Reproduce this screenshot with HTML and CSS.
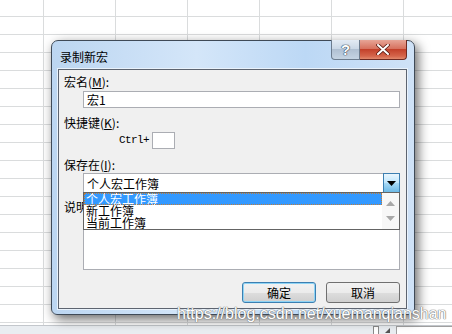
FILE: index.html
```html
<!DOCTYPE html>
<html lang="zh-CN">
<head>
    <meta charset="UTF-8">
    <title>录制新宏</title>
    <link rel="stylesheet" href="styles.css">
</head>
<body>
    <div class="sheet">
        <div class="cells"></div>
        <div class="statusbar">
            <span class="tab-split"></span>
            <span class="tab-arrow"></span>
            <span class="hscroll"></span>
        </div>
    </div>

    <div class="dialog">
        <div class="titlebar">
            <span class="title">录制新宏</span>
            <div class="caption-buttons">
                <span class="btn-help">?</span>
                <span class="btn-close">
                    <svg width="14" height="11" viewBox="0 0 14 11">
                        <path d="M2 1 L12 10 M12 1 L2 10" stroke="#5a1a12" stroke-width="3.6" stroke-linecap="round"/>
                        <path d="M2 1 L12 10 M12 1 L2 10" stroke="#fff" stroke-width="2" stroke-linecap="round"/>
                    </svg>
                </span>
            </div>
        </div>
        <div class="panel">
            <label class="field-label">宏名(<u>M</u>):</label>
            <div class="textbox">宏1</div>

            <label class="field-label">快捷键(<u>K</u>):</label>
            <div class="shortcut">
                <span class="ctrl">Ctrl+</span>
                <span class="keybox"></span>
            </div>

            <label class="field-label">保存在(<u>I</u>):</label>
            <div class="combo">
                <span class="combo-value">个人宏工作簿</span>
                <span class="combo-button">
                    <svg width="9" height="5" viewBox="0 0 9 5"><path d="M0 0 H9 L4.5 5 Z" fill="#000"/></svg>
                </span>
                <div class="droplist">
                    <div class="items">
                        <div class="item selected">个人宏工作簿</div>
                        <div class="item">新工作簿</div>
                        <div class="item">当前工作簿</div>
                    </div>
                    <div class="list-scroll">
                        <svg width="9" height="5" viewBox="0 0 9 5"><path d="M0 5 H9 L4.5 0 Z" fill="#a8a8a8"/></svg>
                        <svg width="9" height="5" viewBox="0 0 9 5"><path d="M0 0 H9 L4.5 5 Z" fill="#a8a8a8"/></svg>
                    </div>
                </div>
            </div>

            <div class="desc-row">
                <label class="field-label">说明(<u>D</u>):</label>
                <div class="textarea"></div>
            </div>

            <div class="actions">
                <button class="default">确定</button>
                <button>取消</button>
            </div>
        </div>
    </div>

    <div class="watermark">https://blog.csdn.net/xuemanqianshan</div>
</body>
</html>
```

FILE: styles.css
```css
body {
    margin: 0;
    width: 452px;
    height: 334px;
    overflow: hidden;
    position: relative;
    font-family: "Noto Sans CJK SC", "Liberation Sans", sans-serif;
    font-size: 12px;
    background: #fff;
}

.sheet {
    display: flex;
    flex-direction: column;
    height: 334px;
}

.cells {
    flex: 1;
    background-color: #fff;
    background-image:
        linear-gradient(to right, #dadcdd 1px, transparent 1px),
        linear-gradient(to bottom, #dadcdd 1px, transparent 1px);
    background-size: 72px 18px;
    background-position: 43px 16px;
}

.statusbar {
    height: 8px;
    border-top: 1px solid #c3c7cc;
    background: #e9edf1;
    display: flex;
    align-items: flex-start;
    padding-left: 373px;
    gap: 6px;
}

.tab-split {
    width: 4px;
    height: 7px;
    border: 1px solid #8a8a8a;
    border-bottom: none;
    background: #fff;
}

.tab-arrow {
    width: 0;
    height: 0;
    margin-top: 2px;
    border-right: 5px solid #555;
    border-top: 5px solid transparent;
}

.hscroll {
    flex: 1;
    height: 8px;
    border-left: 1px solid #a0a0a0;
    border-top: 1px solid #a0a0a0;
    background: #fff;
}

/* dialog window */
.dialog {
    position: absolute;
    left: 51px;
    top: 40px;
    width: 349px;
    height: 268px;
    border: 1px solid #3f4a57;
    border-radius: 7px 7px 6px 6px;
    background: linear-gradient(to right, #bcd6f1, #d4e6f9 40%, #bcd8f5 70%, #cfe2f7);
    box-shadow: 3px 4px 12px rgba(0, 0, 0, 0.6);
    display: flex;
    flex-direction: column;
    padding: 0 7px 5px 6px;
}

.titlebar {
    height: 28px;
    display: flex;
    justify-content: space-between;
    align-items: flex-start;
}

.title {
    margin-top: 9px;
    margin-left: 2px;
    font-size: 12px;
    line-height: 14px;
    color: #000;
}

.caption-buttons {
    display: flex;
    margin-top: -1px;
}

.btn-help, .btn-close {
    height: 19px;
    display: flex;
    justify-content: center;
    align-items: center;
    border: 1px solid #6c7c8e;
    border-top: none;
}

.btn-help {
    width: 27px;
    border-radius: 0 0 0 4px;
    background: linear-gradient(to bottom, #e3ebf4, #cbd8e6 45%, #b0c0d2 50%, #c5d4e3);
    font-family: "Liberation Sans", sans-serif;
    font-weight: bold;
    font-size: 15px;
    line-height: 15px;
    color: #fff;
    text-shadow: 0 0 1px #2d3b4d, 0 0 1px #2d3b4d, 0 0 1px #2d3b4d;
}

.btn-close {
    width: 46px;
    border-left: none;
    border-color: #6e2a22;
    border-radius: 0 0 4px 0;
    background: linear-gradient(to bottom, #e7a597, #d7725f 45%, #c3412b 50%, #d5654b 85%, #e28a6e);
}

.panel {
    flex: 1;
    background: #f0f0f0;
    border: 1px solid #5d6470;
    box-shadow: 0 0 0 1px #e9f2fb;
    padding: 5px 6px 0 5px;
    display: flex;
    flex-direction: column;
    position: relative;
}

.field-label {
    line-height: 14px;
    height: 14px;
    color: #000;
}

.field-label u {
    text-decoration: underline;
    text-underline-offset: 1px;
}

.textbox {
    margin: 2px 0 0 19px;
    height: 15px;
    border: 1px solid #abadb3;
    background: #fff;
    line-height: 15px;
    padding-left: 3px;
}

.panel > .field-label:nth-of-type(2) {
    margin-top: 8px;
}

.shortcut {
    display: flex;
    align-items: center;
    gap: 3px;
    margin: 1px 0 0 55px;
    height: 18px;
}

.ctrl {
    font-family: "Liberation Mono", monospace;
    font-size: 11px;
    letter-spacing: -0.6px;
}

.keybox {
    width: 21px;
    height: 15px;
    border: 1px solid #abadb3;
    background: #fff;
}

.panel > .field-label:nth-of-type(3) {
    margin-top: 9px;
}

.combo {
    margin: 1px 0 0 19px;
    height: 18px;
    border: 1px solid #abadb3;
    background: #fff;
    display: flex;
    align-items: center;
    position: relative;
}

.combo-value {
    flex: 1;
    padding-left: 3px;
}

.combo-button {
    box-sizing: border-box;
    width: 17px;
    height: 20px;
    margin: -1px -1px 0 0;
    align-self: flex-start;
    border: 1px solid #3c7fb1;
    background: linear-gradient(to bottom, #eaf6fd, #bee6fd 50%, #a7d9f5 51%, #6cb9e6);
    display: flex;
    justify-content: center;
    align-items: center;
}

.droplist {
    position: absolute;
    left: -1px;
    right: -1px;
    top: 18px;
    height: 36px;
    border: 1px solid #646464;
    background: #fff;
    display: flex;
    z-index: 2;
}

.items {
    flex: 1;
}

.item {
    height: 12px;
    line-height: 12px;
    padding-left: 2px;
    white-space: nowrap;
}

.item.selected {
    background: #3399ff;
    color: #fff;
    outline: 1px dotted #c07d3a;
    outline-offset: -1px;
}

.list-scroll {
    width: 17px;
    background: #f7f7f7;
    display: flex;
    flex-direction: column;
    justify-content: space-around;
    align-items: center;
    padding: 3px 0;
}

.desc-row {
    display: flex;
    flex-direction: column;
    margin-top: 7px;
}

.textarea {
    margin: 1px 0 0 19px;
    height: 53px;
    border: 1px solid #abadb3;
    background: #fff;
}

.actions {
    display: flex;
    justify-content: flex-end;
    gap: 10px;
    margin-top: 12px;
}

.actions button {
    width: 74px;
    height: 21px;
    padding: 0;
    font-family: "Noto Sans CJK SC", sans-serif;
    font-size: 12px;
    color: #000;
    border: 1px solid #707070;
    border-radius: 3px;
    background: linear-gradient(to bottom, #f2f2f2, #ebebeb 50%, #dddddd 51%, #cfcfcf);
}

.actions button.default {
    border-color: #3c7fb1;
    box-shadow: inset 0 0 0 1px #8ed4f5;
}

.watermark {
    position: absolute;
    left: 177px;
    top: 305px;
    font-family: "Liberation Sans", sans-serif;
    font-size: 16px;
    color: #fff;
    text-shadow: 0 0 1px #6f6f6f, 0 0 1px #6f6f6f, 0 0 1px #9a9a9a;
    z-index: 3;
}
```
